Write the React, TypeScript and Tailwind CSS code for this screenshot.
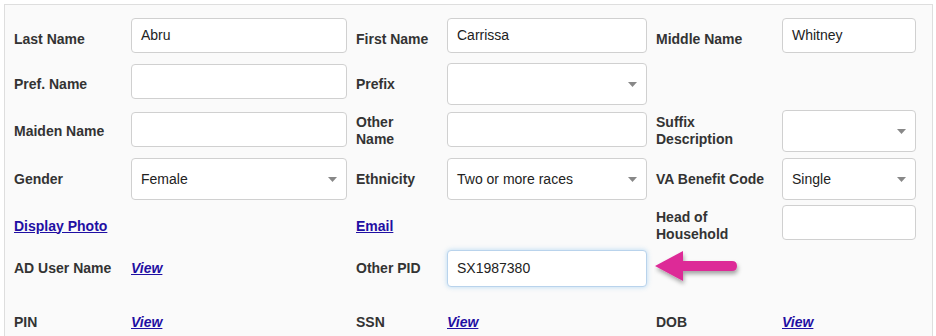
import React from "react";

type Cell =
  | { kind: "label"; text: string; narrow?: boolean }
  | { kind: "link"; text: string }
  | { kind: "view" }
  | { kind: "input"; value?: string; focus?: boolean }
  | { kind: "select"; value?: string }
  | { kind: "arrow" }
  | { kind: "empty" };

type Row = { height: string; margin: string; inputPos: string; cells: Cell[] };

const rows: Row[] = [
  {
    height: "h-[42px]",
    margin: "mt-0",
    inputPos: "self-start",
    cells: [
      { kind: "label", text: "Last Name" },
      { kind: "input", value: "Abru" },
      { kind: "label", text: "First Name" },
      { kind: "input", value: "Carrissa" },
      { kind: "label", text: "Middle Name" },
      { kind: "input", value: "Whitney" },
    ],
  },
  {
    height: "h-[42px]",
    margin: "mt-[3px]",
    inputPos: "self-start mt-[1px]",
    cells: [
      { kind: "label", text: "Pref. Name" },
      { kind: "input" },
      { kind: "label", text: "Prefix" },
      { kind: "select" },
      { kind: "empty" },
      { kind: "empty" },
    ],
  },
  {
    height: "h-[42px]",
    margin: "mt-[5px]",
    inputPos: "self-start mt-[2px]",
    cells: [
      { kind: "label", text: "Maiden Name" },
      { kind: "input" },
      { kind: "label", text: "Other Name", narrow: true },
      { kind: "input" },
      { kind: "label", text: "Suffix Description" },
      { kind: "select" },
    ],
  },
  {
    height: "h-[42px]",
    margin: "mt-[6px]",
    inputPos: "self-start",
    cells: [
      { kind: "label", text: "Gender" },
      { kind: "select", value: "Female" },
      { kind: "label", text: "Ethnicity" },
      { kind: "select", value: "Two or more races" },
      { kind: "label", text: "VA Benefit Code" },
      { kind: "select", value: "Single" },
    ],
  },
  {
    height: "h-[42px]",
    margin: "mt-[5px]",
    inputPos: "self-start",
    cells: [
      { kind: "link", text: "Display Photo" },
      { kind: "empty" },
      { kind: "link", text: "Email" },
      { kind: "empty" },
      { kind: "label", text: "Head of Household" },
      { kind: "input" },
    ],
  },
  {
    height: "h-[37px]",
    margin: "mt-[1px]",
    inputPos: "h-[37px]",
    cells: [
      { kind: "label", text: "AD User Name" },
      { kind: "view" },
      { kind: "label", text: "Other PID" },
      { kind: "input", value: "SX1987380", focus: true },
      { kind: "arrow" },
      { kind: "empty" },
    ],
  },
  {
    height: "h-[42px]",
    margin: "mt-[16px]",
    inputPos: "self-start",
    cells: [
      { kind: "label", text: "PIN" },
      { kind: "view" },
      { kind: "label", text: "SSN" },
      { kind: "view" },
      { kind: "label", text: "DOB" },
      { kind: "view" },
    ],
  },
];

function Caret() {
  return (
    <svg width="9" height="5" viewBox="0 0 9 5" className="shrink-0">
      <path d="M0 0 H9 L4.5 5 Z" fill="#888" />
    </svg>
  );
}

function Arrow() {
  return (
    <svg width="92" height="40" viewBox="0 0 92 40" className="ml-[7px]">
      <defs>
        <filter id="arrowShadow" x="-20%" y="-30%" width="140%" height="170%">
          <feDropShadow dx="1" dy="3" stdDeviation="2" floodColor="#000" floodOpacity="0.35" />
        </filter>
      </defs>
      <g filter="url(#arrowShadow)">
        <path d="M1 18 L29 3 L29 13 L78 13 Q83 13 83 18 Q83 23 78 23 L29 23 L29 33 Z" fill="#dd2b97" />
      </g>
    </svg>
  );
}

function renderCell(cell: Cell, col: number, row: Row) {
  const pad = col === 2 || col === 4 ? "pl-[9px]" : "";
  switch (cell.kind) {
    case "label":
      return (
        <div
          className={`${pad} ${
            cell.narrow ? "w-[86px]" : ""
          } pr-2 text-[14px] font-bold leading-[17px] text-[#333]`}
        >
          {cell.text}
        </div>
      );
    case "link":
      return (
        <div className={`${pad} text-[14px] font-bold leading-[17px] text-[#1f0fa3] underline`}>
          {cell.text}
        </div>
      );
    case "view":
      return (
        <div className="text-[14px] font-bold italic leading-[17px] text-[#1f0fa3] underline">
          View
        </div>
      );
    case "input":
      return (
        <div
          className={`${row.inputPos} flex h-[35px] items-center rounded-[4px] border bg-white pl-[9px] text-[14px] text-[#222] ${
            cell.focus
              ? "border-[#b9d3ec] shadow-[0_0_5px_rgba(102,175,233,0.45)]"
              : "border-[#d0d0d0]"
          }`}
        >
          {cell.value}
        </div>
      );
    case "select":
      return (
        <div className="flex h-[42px] items-center justify-between rounded-[4px] border border-[#d0d0d0] bg-white pl-[9px] pr-[9px] text-[14px] text-[#222]">
          <span>{cell.value}</span>
          <Caret />
        </div>
      );
    case "arrow":
      return (
        <div className="flex items-center">
          <Arrow />
        </div>
      );
    default:
      return <div />;
  }
}

export default function App() {
  return (
    <div className="min-h-[336px] bg-white pl-[4px] pr-[3px] pt-[4px] font-['Liberation_Sans',Arial,sans-serif]">
      <div className="min-h-[332px] border-l border-r border-t border-[#dedede] bg-[#fafafa] pl-[9px] pt-[13px]">
        {rows.map((row, i) => (
          <div
            key={i}
            className={`grid grid-cols-[117px_216px_100px_200px_135px_134px] items-center ${row.height} ${row.margin}`}
          >
            {row.cells.map((cell, j) => (
              <React.Fragment key={j}>{renderCell(cell, j, row)}</React.Fragment>
            ))}
          </div>
        ))}
      </div>
    </div>
  );
}
